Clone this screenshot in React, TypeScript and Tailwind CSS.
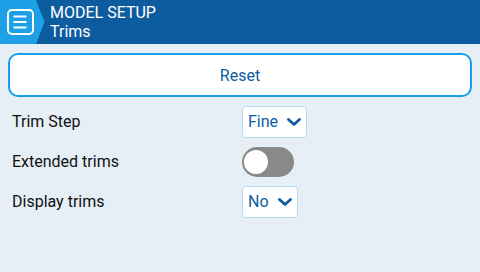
import React from "react";

const Chevron = () => (
  <svg width="14" height="8" viewBox="0 0 14 8" className="shrink-0">
    <polyline
      points="1.5,1.5 7,6.5 12.5,1.5"
      fill="none"
      stroke="#0e5ca0"
      strokeWidth="2.8"
      strokeLinecap="round"
      strokeLinejoin="round"
    />
  </svg>
);

const Choice = ({ value }: { value: string }) => (
  <div className="flex h-[32px] items-center gap-[9px] rounded-[4px] border border-[#b3dcf3] bg-white pl-[5px] pr-[5px] text-[16px] text-[#0e5ca0]">
    <span>{value}</span>
    <Chevron />
  </div>
);

const Toggle = ({ on }: { on: boolean }) => (
  <div
    className={`relative h-[30px] w-[52px] rounded-full ${on ? "bg-[#1da0e6]" : "bg-[#888a87]"}`}
  >
    <div className="absolute left-[2px] top-[3px] h-[24px] w-[24px] rounded-full bg-white" />
  </div>
);

const Row = ({ label, children }: { label: string; children: React.ReactNode }) => (
  <div className="flex h-[40px] items-center px-1">
    <div className="w-[230px] text-[16px] text-[#111]">{label}</div>
    <div>{children}</div>
  </div>
);

export default function App() {
  return (
    <div
      className="flex h-[272px] w-[480px] flex-col overflow-hidden bg-[#e6eef6]"
      style={{ fontFamily: "Roboto, 'Liberation Sans', sans-serif" }}
    >
      <header className="flex h-[44px] shrink-0 bg-[#0e5ca0]">
        <div className="w-[45px] shrink-0">
          <svg width="45" height="44" viewBox="0 0 45 44">
            <polygon points="0,0 36,0 44.5,22 36,44 0,44" fill="#1da0e6" />
            <rect x="8" y="10" width="25" height="24" rx="4" fill="none" stroke="#fff" strokeWidth="2" />
            <rect x="13.5" y="15.5" width="13" height="2" fill="#fff" />
            <rect x="13.5" y="21" width="13" height="2" fill="#fff" />
            <rect x="13.5" y="26.5" width="13" height="2" fill="#fff" />
          </svg>
        </div>
        <div className="ml-[5px] pt-[3px] text-[16px] leading-[19px] text-white">
          <div>MODEL SETUP</div>
          <div>Trims</div>
        </div>
      </header>
      <main className="flex flex-col px-2 pt-[9px]">
        <button className="flex h-[44px] items-center justify-center rounded-[10px] border-2 border-[#17a0e6] bg-white pt-[1px] text-[16px] text-[#0e5ca0]">
          Reset
        </button>
        <div className="flex flex-col pt-[5px]">
          <Row label="Trim Step">
            <Choice value="Fine" />
          </Row>
          <Row label="Extended trims">
            <Toggle on={false} />
          </Row>
          <Row label="Display trims">
            <Choice value="No" />
          </Row>
        </div>
      </main>
    </div>
  );
}
